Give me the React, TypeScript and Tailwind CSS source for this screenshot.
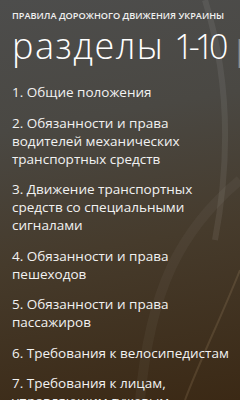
import React from "react";

const items = [
  "1. Общие положения",
  "2. Обязанности и права водителей механических транспортных средств",
  "3. Движение транспортных средств со специальными сигналами",
  "4. Обязанности и права пешеходов",
  "5. Обязанности и права пассажиров",
  "6. Требования к велосипедистам",
  "7. Требования к лицам, управляющим гужевым транспортом",
];

export default function App() {
  return (
    <div
      className="relative w-[240px] h-[400px] overflow-hidden text-white bg-[linear-gradient(170deg,#4d4d4c_0%,#4a4843_30%,#463b2c_60%,#3b2915_100%)]"
      style={{ fontFamily: '"Open Sans", "Noto Sans", sans-serif' }}
    >
      <svg
        className="absolute inset-0 pointer-events-none"
        width="240"
        height="400"
        viewBox="0 0 240 400"
      >
        <path d="M205 0 C 230 80, 230 160, 215 240" stroke="#ffffff" strokeOpacity="0.07" strokeWidth="6" fill="none" />
        <path d="M240 270 C 220 320, 200 360, 185 400" stroke="#f5d9a8" strokeOpacity="0.12" strokeWidth="2" fill="none" />
        <path d="M240 180 C 180 230, 150 290, 140 400" stroke="#ffffff" strokeOpacity="0.04" strokeWidth="10" fill="none" />
      </svg>
      <div className="relative flex flex-col pl-3">
        <div className="pt-[10px] text-[9.2px] font-semibold leading-[12px] whitespace-nowrap text-[#f0f0f0]">
          ПРАВИЛА ДОРОЖНОГО ДВИЖЕНИЯ УКРАИНЫ
        </div>
        <div className="mt-[1px] flex items-baseline text-[36px] font-light leading-[46px] whitespace-nowrap">
          <span className="tracking-[1.5px]">разделы</span>
          <span className="ml-[10px] text-[34px] -tracking-[5px]">1-10</span>
          <span className="ml-[12px] opacity-40">разделы</span>
        </div>
        <div className="mt-[14px] flex flex-col gap-[12.5px]">
          {items.map((t) => (
            <div key={t} className="text-[13.5px] leading-[18px] text-[#f2f2f2]">
              {t}
            </div>
          ))}
        </div>
      </div>
    </div>
  );
}
